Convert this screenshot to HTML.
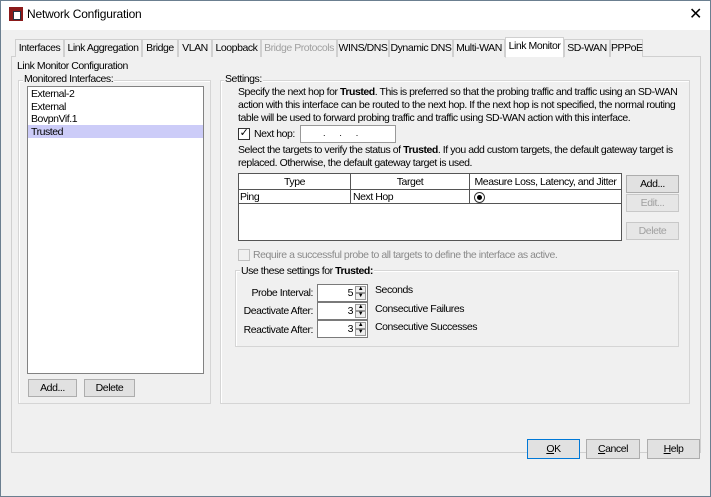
<!DOCTYPE html>
<html><head><style>
*{box-sizing:border-box;margin:0;padding:0}
body{width:711px;height:497px;background:#f0f0f0;font-family:"Liberation Sans",sans-serif;font-size:10.5px;letter-spacing:-0.45px;color:#000;position:relative;overflow:hidden}
.a{position:absolute;white-space:nowrap}
.win{left:0;top:0;width:711px;height:497px;border:1px solid #6b7f90}
.title{left:1px;top:1px;width:709px;height:29px;background:#fff}
.tab{position:absolute;top:39px;height:18px;border:1px solid #d0d0d0;border-bottom:none;background:#f0f0f0;text-align:center;line-height:16px;white-space:nowrap}
.btn{position:absolute;border:1px solid #adadad;background:#e1e1e1;text-align:center;white-space:nowrap}
.grp{position:absolute;border:1px solid #d5d5d5;box-shadow:inset 1px 1px 0 #fff}
.lbl{position:absolute;background:#f0f0f0;padding:0 1px;line-height:12px;white-space:nowrap}
.cb{position:absolute;width:12px;height:12px;border:1px solid #333;background:#fff}
.spin{position:absolute;width:51px;height:18px;border:1px solid #7a7a7a;background:#fff}
.spin span{position:absolute;right:14px;top:2px}
.spin i{position:absolute;right:1px;width:11px;height:7px;border:1px solid #999;background:#eee;font-style:normal;font-size:6px;line-height:5px;text-align:center}
.t{line-height:13px}
</style></head><body>
<div class="a win"></div>
<div class="a title"></div>
<div class="a" style="left:9px;top:7px;width:14px;height:14px;background:#8b1a1a"></div>
<div class="a" style="left:13px;top:11px;width:8px;height:9px;background:#fff;border:1px solid #234"></div>
<div class="a" style="left:27px;top:7px;font-size:12px;letter-spacing:-0.2px">Network Configuration</div>
<div class="a" style="left:689px;top:4px;font-size:16px;font-weight:300">✕</div>

<div class="a" style="left:11px;top:56px;width:690px;height:397px;border:1px solid #d0d0d0;background:#f0f0f0"></div>
<div class="tab" style="left:15px;width:49px">Interfaces</div>
<div class="tab" style="left:64px;width:78px">Link Aggregation</div>
<div class="tab" style="left:142px;width:36px">Bridge</div>
<div class="tab" style="left:178px;width:34px">VLAN</div>
<div class="tab" style="left:212px;width:49px">Loopback</div>
<div class="tab" style="left:261px;width:76px;color:#a0a0a0">Bridge Protocols</div>
<div class="tab" style="left:337px;width:52px">WINS/DNS</div>
<div class="tab" style="left:389px;width:64px">Dynamic DNS</div>
<div class="tab" style="left:453px;width:52px">Multi-WAN</div>
<div class="tab" style="left:505px;width:59px;top:37px;height:21px;background:#fff;line-height:17px;border-bottom:1px solid #f0f0f0">Link Monitor</div>
<div class="tab" style="left:564px;width:46px">SD-WAN</div>
<div class="tab" style="left:610px;width:33px">PPPoE</div>

<div class="a" style="left:17px;top:60px">Link Monitor Configuration</div>

<div class="grp" style="left:18px;top:80px;width:193px;height:324px"></div>
<div class="lbl" style="left:23px;top:73px">Monitored Interfaces:</div>
<div class="a" style="left:27px;top:86px;width:177px;height:288px;border:1px solid #828282;background:#fff"></div>
<div class="a" style="left:31px;top:88px">External-2</div>
<div class="a" style="left:31px;top:101px">External</div>
<div class="a" style="left:31px;top:113px">BovpnVif.1</div>
<div class="a" style="left:28px;top:125px;width:175px;height:13px;background:#ccccf8"></div>
<div class="a" style="left:31px;top:126px">Trusted</div>
<div class="btn" style="left:28px;top:379px;width:49px;height:18px;line-height:16px">Add...</div>
<div class="btn" style="left:84px;top:379px;width:51px;height:18px;line-height:16px">Delete</div>

<div class="grp" style="left:220px;top:80px;width:470px;height:324px"></div>
<div class="lbl" style="left:224px;top:73px">Settings:</div>
<div class="a t" style="left:238px;top:86px">Specify the next hop for <b>Trusted</b>. This is preferred so that the probing traffic and traffic using an SD-WAN<br>action with this interface can be routed to the next hop. If the next hop is not specified, the normal routing<br>table will be used to forward probing traffic and traffic using SD-WAN action with this interface.</div>
<div class="cb" style="left:238px;top:128px;font-size:11px;line-height:9px;text-align:center">✓</div>
<div class="a" style="left:254px;top:128px">Next hop:</div>
<div class="a" style="left:300px;top:125px;width:96px;height:18px;border:1px solid #999;background:#fff;font-size:9px;line-height:14px;padding-left:22px">.&nbsp;&nbsp;&nbsp;&nbsp;&nbsp;&nbsp;&nbsp;.&nbsp;&nbsp;&nbsp;&nbsp;&nbsp;&nbsp;&nbsp;.</div>
<div class="a t" style="left:238px;top:144px">Select the targets to verify the status of <b>Trusted</b>. If you add custom targets, the default gateway target is<br>replaced. Otherwise, the default gateway target is used.</div>
<div class="a" style="left:238px;top:173px;width:384px;height:68px;border:1px solid #555;background:#fff"></div>
<div class="a" style="left:239px;top:174px;width:382px;height:16px;border-bottom:1px solid #555"></div>
<div class="a" style="left:239px;top:190px;width:382px;height:14px;border-bottom:1px solid #555"></div>
<div class="a" style="left:350px;top:174px;width:1px;height:30px;background:#555"></div>
<div class="a" style="left:469px;top:174px;width:1px;height:30px;background:#555"></div>
<div class="a" style="left:239px;top:176px;width:111px;text-align:center">Type</div>
<div class="a" style="left:351px;top:176px;width:118px;text-align:center">Target</div>
<div class="a" style="left:470px;top:176px;width:151px;text-align:center">Measure Loss, Latency, and Jitter</div>
<div class="a" style="left:240px;top:191px">Ping</div>
<div class="a" style="left:353px;top:191px">Next Hop</div>
<div class="a" style="left:474px;top:192px;width:11px;height:11px;border:1px solid #333;border-radius:50%"></div>
<div class="a" style="left:477px;top:195px;width:5px;height:5px;background:#000;border-radius:50%"></div>
<div class="btn" style="left:626px;top:175px;width:53px;height:18px;line-height:16px">Add...</div>
<div class="btn" style="left:626px;top:194px;width:53px;height:18px;line-height:16px;color:#a0a0a0;border-color:#c8c8c8;background:#e6e6e6">Edit...</div>
<div class="btn" style="left:626px;top:222px;width:53px;height:18px;line-height:16px;color:#a0a0a0;border-color:#c8c8c8;background:#e6e6e6">Delete</div>
<div class="cb" style="left:238px;top:249px;border-color:#c0c0c0;background:#f0f0f0"></div>
<div class="a" style="left:253px;top:249px;color:#8a8a8a">Require a successful probe to all targets to define the interface as active.</div>

<div class="grp" style="left:235px;top:270px;width:444px;height:77px"></div>
<div class="lbl" style="left:240px;top:265px">Use these settings for <b>Trusted:</b></div>
<div class="a" style="left:220px;top:287px;width:93px;text-align:right">Probe Interval:</div>
<div class="a" style="left:220px;top:305px;width:93px;text-align:right">Deactivate After:</div>
<div class="a" style="left:220px;top:324px;width:93px;text-align:right">Reactivate After:</div>
<div class="spin" style="left:317px;top:284px"><span>5</span><i style="top:1px">▲</i><i style="top:8px">▼</i></div>
<div class="spin" style="left:317px;top:302px"><span>3</span><i style="top:1px">▲</i><i style="top:8px">▼</i></div>
<div class="spin" style="left:317px;top:320px"><span>3</span><i style="top:1px">▲</i><i style="top:8px">▼</i></div>
<div class="a" style="left:375px;top:284px">Seconds</div>
<div class="a" style="left:375px;top:303px">Consecutive Failures</div>
<div class="a" style="left:375px;top:321px">Consecutive Successes</div>

<div class="btn" style="left:527px;top:439px;width:53px;height:20px;line-height:18px;border:1px solid #0078d7"><u>O</u>K</div>
<div class="btn" style="left:586px;top:439px;width:54px;height:20px;line-height:18px"><u>C</u>ancel</div>
<div class="btn" style="left:647px;top:439px;width:53px;height:20px;line-height:18px"><u>H</u>elp</div>
</body></html>
